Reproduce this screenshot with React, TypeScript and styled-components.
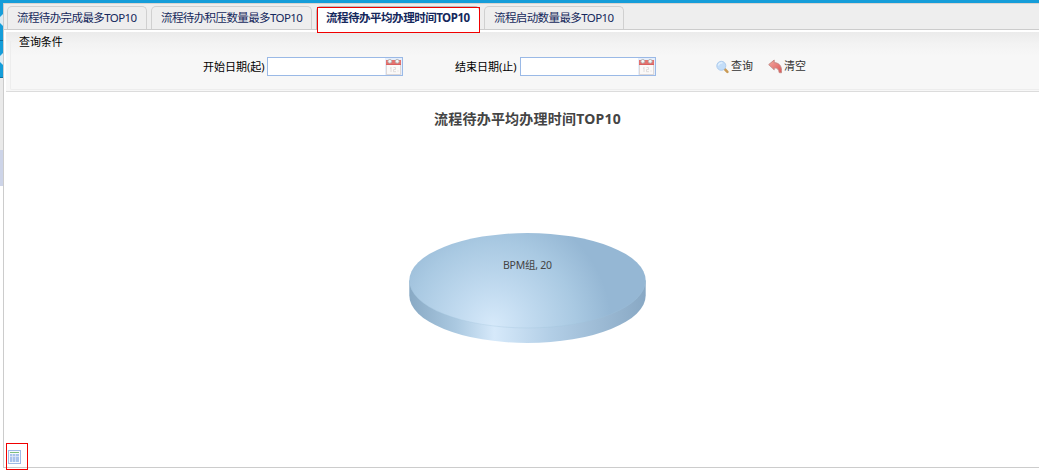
import React from 'react';
import styled, { createGlobalStyle } from 'styled-components';

const GlobalStyle = createGlobalStyle`
  * { box-sizing: border-box; }
  body {
    margin: 0;
    background: #fff;
    font-family: "Noto Sans", "Noto Sans CJK SC", sans-serif;
    font-size: 11px;
    color: #000;
  }
`;

const Page = styled.div`
  width: 1039px;
  height: 472px;
  overflow: hidden;
  display: flex;
  flex-direction: column;
`;

const TopBar = styled.div`
  flex: none;
  height: 3px;
  background: #159dd9;
`;

const Body = styled.div`
  display: flex;
  height: 469px;
`;

const Rail = styled.div`
  flex: none;
  width: 3px;
  display: flex;
  flex-direction: column;
`;

const RailBlock = styled.div<{ $height: number; $color: string; $line?: string }>`
  height: ${(p) => p.$height}px;
  background: ${(p) => p.$color};
  border-bottom: ${(p) => (p.$line ? `1px solid ${p.$line}` : '0')};
  display: flex;
  align-items: flex-end;
`;

const Arrow = styled.svg<{ $bottom: number }>`
  display: block;
  width: 3px;
  height: 12px;
  margin-bottom: ${(p) => p.$bottom}px;
`;

const Main = styled.div`
  flex: 1;
  height: 465px;
  border-left: 1px solid #ccc;
  border-bottom: 1px solid #ccc;
  display: flex;
  flex-direction: column;
`;

const TabStrip = styled.div`
  flex: none;
  height: 27px;
  padding: 2px 0 0 3px;
  display: flex;
  gap: 4px;
  background: #eee;
  border-top: 1px solid #d8d4d0;
  border-bottom: 1px solid #ccc;
`;

const Tab = styled.div<{ $width: number; $active?: boolean; $spacing: number }>`
  width: ${(p) => p.$width}px;
  height: ${(p) => (p.$active ? 24 : 23)}px;
  border: 1px solid ${(p) => (p.$active ? '#bbb' : '#d0d0d0')};
  border-bottom: 0;
  border-radius: 5px 5px 0 0;
  background: ${(p) => (p.$active ? '#fff' : '#eee')};
  padding-left: 9px;
  font-size: 11.5px;
  line-height: 22px;
  white-space: nowrap;
  color: #15285c;
  font-weight: ${(p) => (p.$active ? 700 : 400)};
  letter-spacing: ${(p) => p.$spacing}px;
  position: relative;
`;

const Highlight = styled.div<{ $left: number; $top: number; $width: number; $height: number }>`
  position: absolute;
  left: ${(p) => p.$left}px;
  top: ${(p) => p.$top}px;
  width: ${(p) => p.$width}px;
  height: ${(p) => p.$height}px;
  border: 1px solid #f00000;
`;

const QueryPanel = styled.div`
  flex: none;
  height: 60px;
  margin: 2px 0 0 2px;
  padding: 8px 0 1px 4px;
  border-bottom: 1px solid #dcdcdc;
  background: linear-gradient(#ebebeb 0, #f3f3f3 12px, #f7f7f7 24px);
`;

const QueryGroup = styled.div`
  height: 50px;
  border: 1px solid #ededed;
  border-top-color: transparent;
  border-right: 0;
  border-radius: 2px 0 0 2px;
`;

const Legend = styled.div`
  width: 47px;
  height: 14px;
  margin: -6px 0 0 8px;
  line-height: 14px;
  white-space: nowrap;
  letter-spacing: -0.1px;
`;

const FieldRow = styled.div`
  display: flex;
  align-items: center;
  height: 19px;
  margin: 8px 0 0 192px;
`;

const FieldLabel = styled.label<{ $width: number }>`
  width: ${(p) => p.$width}px;
  line-height: 18px;
  white-space: nowrap;
`;

const DateField = styled.div<{ $gap: number }>`
  width: 136px;
  height: 19px;
  margin-right: ${(p) => p.$gap}px;
  border: 1px solid #9ab9e6;
  background: #fff;
  display: flex;
  justify-content: flex-end;
`;

const Action = styled.div<{ $gap: number; $iconGap: number }>`
  display: flex;
  align-items: center;
  gap: ${(p) => p.$iconGap}px;
  margin-right: ${(p) => p.$gap}px;
  line-height: 18px;
  color: #333;
  white-space: nowrap;
  span { margin-top: -1px; }
  svg { display: block; }
`;

const ChartArea = styled.div`
  flex: 1;
  position: relative;
  display: flex;
  flex-direction: column;
`;

const ChartTitle = styled.h1`
  margin: 17px 0 0 430px;
  font-size: 14px;
  line-height: 20px;
  font-weight: 700;
  letter-spacing: 0.22px;
  color: #444;
  white-space: nowrap;
`;

const Pie = styled.svg`
  display: block;
  width: 240px;
  height: 114px;
  margin: 102px 0 0 403px;
`;

const TableButton = styled.div`
  position: absolute;
  left: 4px;
  bottom: 3px;
  width: 14px;
  height: 14px;
`;

const CalendarIcon = () => (
  <svg width="17" height="17" viewBox="0 0 17 17">
    <rect width="17" height="17" fill="#e6eefb" />
    <rect x="1.5" y="2.5" width="14" height="14" fill="#fbf9f8" stroke="#ddd8d8" />
    <rect x="1" y="2" width="15" height="5" fill="#e4726e" />
    <rect x="1" y="6" width="15" height="1" fill="#d9605f" />
    <circle cx="4.8" cy="3.3" r="1.9" fill="#f5f5f5" stroke="#aaa" strokeWidth=".8" />
    <circle cx="12.2" cy="3.3" r="1.9" fill="#f5f5f5" stroke="#aaa" strokeWidth=".8" />
    <path d="M6 9v5M5 10.2h1M8.5 9.5h2v2h-2v2.2h2.5M12.5 13h1" stroke="#dcd8d8" strokeWidth=".9" fill="none" />
  </svg>
);

const SearchIcon = () => (
  <svg width="14" height="14" viewBox="0 0 14 14">
    <path d="M8.8 9.2l2.6 2.6" stroke="#c99a55" strokeWidth="2.6" strokeLinecap="round" />
    <circle cx="5.3" cy="5.8" r="4.5" fill="#c3ddf8" stroke="#b0cdee" />
    <path d="M2.5 5.5a3 3 0 0 1 4-2.5" stroke="#e8f4ff" strokeWidth="1.3" fill="none" />
  </svg>
);

const UndoIcon = () => (
  <svg width="15" height="15" viewBox="0 0 15 15">
    <defs>
      <linearGradient id="undoFill" x1="0" y1="0" x2="1" y2="1">
        <stop offset="0" stopColor="#f4aaa2" />
        <stop offset="1" stopColor="#dc5555" />
      </linearGradient>
    </defs>
    <path d="M.7 5.6L6.2 1v2.6c5 .3 8 3.6 7.2 10.2l-2.2-.2c-.3-3.2-1.7-4.8-5-4.8v2z" fill="url(#undoFill)" stroke="#c28680" strokeWidth=".9" />
  </svg>
);

const TableIcon = () => (
  <svg width="14" height="14" viewBox="0 0 14 14">
    <rect x=".5" y=".5" width="12" height="13" fill="#f8fbff" stroke="#9fbbe6" />
    <rect x="2" y="2" width="9" height="1" fill="#7fbf7f" />
    <rect x="2" y="4" width="9" height="8" fill="#a9c3ec" />
    <path d="M2 6.5h9M4.5 4v8M7.5 4v8" stroke="#dfe9f8" strokeWidth=".8" />
  </svg>
);

const PieChart = () => (
  <Pie viewBox="407 231 240 114">
    <defs>
      <radialGradient id="pieTop" gradientUnits="userSpaceOnUse" cx="493" cy="325" r="118">
        <stop offset="0" stopColor="#d6e9fa" />
        <stop offset=".3" stopColor="#c2dbf0" />
        <stop offset=".7" stopColor="#a9c9e2" />
        <stop offset="1" stopColor="#95b7d4" />
      </radialGradient>
      <linearGradient id="pieSide" gradientUnits="userSpaceOnUse" x1="409" y1="0" x2="646" y2="0">
        <stop offset="0" stopColor="#88a9c4" />
        <stop offset=".2" stopColor="#abc9e1" />
        <stop offset=".36" stopColor="#d6e9fa" />
        <stop offset=".6" stopColor="#b2cee6" />
        <stop offset="1" stopColor="#88a8c4" />
      </linearGradient>
    </defs>
    <path d="M409.3 280.5v15a118.2 47.5 0 0 0 236.4 0v-15z" fill="url(#pieSide)" />
    <ellipse cx="527.5" cy="280.5" rx="118.2" ry="47.5" fill="url(#pieTop)" />
    <path d="M409.5 280.5a118 47.5 0 0 0 236 0" fill="none" stroke="#a0c2da" strokeWidth=".3" />
    <text x="503" y="269" fontSize="10.5" fill="#444" textLength="49" lengthAdjust="spacing">BPM组, 20</text>
  </Pie>
);

const App = () => (
  <>
    <GlobalStyle />
    <Page>
      <TopBar />
      <Body>
        <Rail>
          <RailBlock $height={38} $color="#159dd9" $line="#0c6fa0">
            <Arrow viewBox="0 0 3 12" $bottom={14}><path d="M3 0v12L0 9V3z" fill="#dcebf3" /></Arrow>
          </RailBlock>
          <RailBlock $height={37} $color="#159dd9" $line="#0c6fa0">
            <Arrow viewBox="0 0 3 12" $bottom={12}><path d="M3 0v12L0 9V3z" fill="#dcebf3" /></Arrow>
          </RailBlock>
          <RailBlock $height={72} $color="#eaeaea" />
          <RailBlock $height={36} $color="#cdd4e8" />
        </Rail>
        <Main>
          <TabStrip>
            <Tab $width={140} $spacing={-0.6}>流程待办完成最多TOP10</Tab>
            <Tab $width={161} $spacing={-0.6}>流程待办积压数量最多TOP10</Tab>
            <Tab $width={164} $spacing={-0.48} $active>
              流程待办平均办理时间TOP10
              <Highlight $left={0} $top={0} $width={163} $height={26} />
            </Tab>
            <Tab $width={140} $spacing={-0.6}>流程启动数量最多TOP10</Tab>
          </TabStrip>
          <QueryPanel>
            <QueryGroup>
              <Legend>查询条件</Legend>
              <FieldRow>
                <FieldLabel $width={64}>开始日期(起)</FieldLabel>
                <DateField $gap={52}><CalendarIcon /></DateField>
                <FieldLabel $width={65}>结束日期(止)</FieldLabel>
                <DateField $gap={60}><CalendarIcon /></DateField>
                <Action $gap={15} $iconGap={1}><SearchIcon /><span>查询</span></Action>
                <Action $gap={0} $iconGap={1}><UndoIcon /><span>清空</span></Action>
              </FieldRow>
            </QueryGroup>
          </QueryPanel>
          <ChartArea>
            <ChartTitle>流程待办平均办理时间TOP10</ChartTitle>
            <PieChart />
            <TableButton>
              <TableIcon />
              <Highlight $left={-2} $top={-7} $width={22} $height={27} />
            </TableButton>
          </ChartArea>
        </Main>
      </Body>
    </Page>
  </>
);

export default App;
